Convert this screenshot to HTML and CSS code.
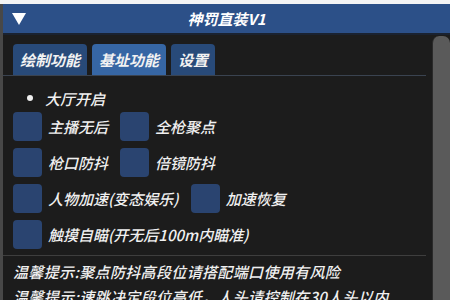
FILE: index.html
```html
<!DOCTYPE html>
<html lang="zh">
<head>
<meta charset="utf-8">
<link rel="stylesheet" href="styles.css">
</head>
<body>
<div class="window">
  <div class="titlebar">
    <svg class="arrow" width="14" height="12" viewBox="0 0 14 12"><polygon points="0,0 14,0 7,12" fill="#ffffff"/></svg>
    <span class="title">神罚直装V1</span>
    <span></span>
  </div>
  <div class="main">
    <div class="content">
      <div class="tabs">
        <div class="tab">绘制功能</div>
        <div class="tab active">基址功能</div>
        <div class="tab">设置</div>
      </div>
      <div class="bullet-row"><span class="dot"></span><span class="label">大厅开启</span></div>
      <div class="rows">
        <div class="row">
          <div class="check"><span class="box"></span><span class="label">主播无后</span></div>
          <div class="check"><span class="box"></span><span class="label">全枪聚点</span></div>
        </div>
        <div class="row">
          <div class="check"><span class="box"></span><span class="label">枪口防抖</span></div>
          <div class="check"><span class="box"></span><span class="label">倍镜防抖</span></div>
        </div>
        <div class="row">
          <div class="check"><span class="box"></span><span class="label">人物加速(变态娱乐)</span></div>
          <div class="check"><span class="box"></span><span class="label">加速恢复</span></div>
        </div>
        <div class="row">
          <div class="check"><span class="box"></span><span class="label">触摸自瞄(开无后100m内瞄准)</span></div>
        </div>
      </div>
      <div class="sep"></div>
      <div class="notes">
        <div class="note">温馨提示:聚点防抖高段位请搭配端口使用有风险</div>
        <div class="note">温馨提示:速跳决定段位高低，人头请控制在30人头以内</div>
      </div>
    </div>
    <div class="scrollbar"></div>
  </div>
</div>
</body>
</html>
```
FILE: styles.css
```css
html, body {
  margin: 0;
  padding: 0;
  background: #f4f4f4;
  overflow: hidden;
}
body {
  width: 450px;
  height: 300px;
  font-family: "Noto Sans CJK SC", "Noto Sans", sans-serif;
  font-style: italic;
  color: #f0f0f0;
}
.window {
  margin-top: 4px;
  height: 296px;
  background: #1c1c1c;
  border-left: 3px solid #484848;
  display: flex;
  flex-direction: column;
  overflow: hidden;
}
.titlebar {
  height: 29px;
  flex: none;
  background: #2c5088;
  display: grid;
  grid-template-columns: 1fr auto 1fr;
  align-items: center;
  border-bottom: 2px solid #1a2230;
}
.arrow {
  margin-left: 9px;
  justify-self: start;
}
.title {
  font-size: 15px;
  font-weight: 700;
  color: #ffffff;
  line-height: 29px;
}
.main {
  flex: 1;
  display: flex;
  min-height: 0;
}
.content {
  flex: 1;
  padding-left: 10px;
  padding-right: 6px;
}
.scrollbar {
  width: 17px;
  margin-top: 1px;
  background: #5a5a5a;
  border-radius: 7px 7px 0 0;
  border-left: 1px solid #2a2a2a;
}
.tabs {
  margin-top: 9px;
  display: flex;
  gap: 5px;
  border-bottom: 1px solid #3a4350;
  margin-left: -10px;
  padding-left: 10px;
}
.tab {
  height: 31px;
  line-height: 31px;
  padding: 0 7px 0 7px;
  background: #284a79;
  border-radius: 4px 4px 0 0;
  font-size: 15px;
  font-weight: 700;
  color: #f2f2f2;
}
.tab.active {
  background: #3666a4;
}
.bullet-row {
  margin-top: 11px;
  height: 22px;
  display: flex;
  align-items: center;
  padding-left: 14px;
  gap: 12px;
}
.dot {
  width: 6px;
  height: 6px;
  border-radius: 50%;
  background: #f0f0f0;
}
.label {
  font-size: 15px;
  font-weight: 500;
  white-space: nowrap;
}
.rows {
  margin-top: 3px;
  display: flex;
  flex-direction: column;
  gap: 7px;
}
.row {
  display: flex;
  align-items: center;
  gap: 12px;
  height: 29px;
}
.check {
  display: flex;
  align-items: center;
  gap: 6px;
}
.box {
  width: 29px;
  height: 29px;
  border-radius: 4px;
  background: #2a4470;
}
.sep {
  margin-top: 6px;
  height: 1px;
  background: #3e3e3e;
  margin-left: -10px;
}
.notes {
  padding-top: 3px;
}
.note {
  font-size: 15px;
  font-weight: 500;
  line-height: 25px;
  letter-spacing: 0.35px;
  white-space: nowrap;
}
```
